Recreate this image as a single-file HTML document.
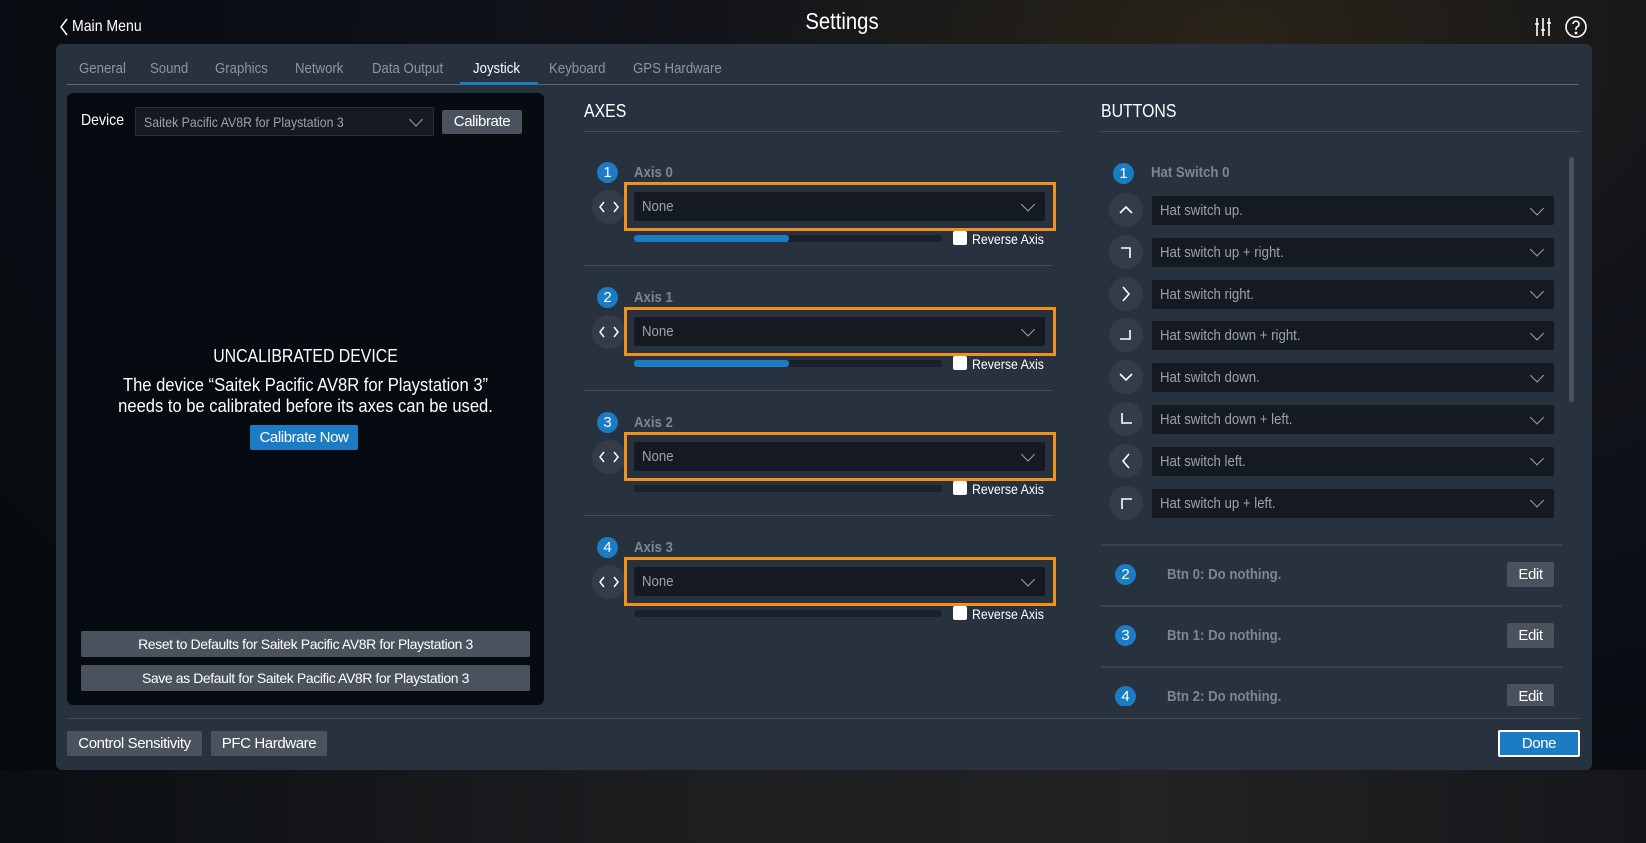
<!DOCTYPE html>
<html><head><meta charset="utf-8"><style>
*{box-sizing:border-box;margin:0;padding:0}
body{width:1646px;height:843px;overflow:hidden;position:relative;font-family:"Liberation Sans Narrow","Liberation Sans",sans-serif;color:#fff;
background:radial-gradient(ellipse at 75% 5%,#2a2418 0,#12141a 30%,#0a0e14 60%,#05080c 100%)}
.a{position:absolute}
.n{transform:scaleX(.88);transform-origin:0 0}
.nc{transform:scaleX(.88);transform-origin:50% 0}
.s{display:inline-block;transform:scaleX(.88);transform-origin:0 50%;white-space:nowrap}
.panel{left:56px;top:44px;width:1536px;height:726px;background:#28313e;border-radius:6px}
.tab{top:60px;font-size:15px;color:#8b95a3}
.btn{background:#4a525e;color:#fff;font-size:14px;text-align:center;border-radius:2px;letter-spacing:-.4px;white-space:nowrap}
.sel{background:#151a22;color:#9aa2ad;font-size:15px;border-radius:2px}
.chev{position:absolute;right:12px;top:50%;width:10px;height:10px;border-right:1.5px solid #9aa2ad;border-bottom:1.5px solid #9aa2ad;transform:translateY(-75%) rotate(45deg)}
.num{width:21px;height:21px;border-radius:50%;background:#1b7cc4;color:#fff;font-size:15px;text-align:center;line-height:21px}
.lab{color:#7d8693;font-size:15px;font-weight:bold;transform:scaleX(.88);transform-origin:0 0}
.circ{width:34px;height:34px;border-radius:50%;background:#343c49}
.line{height:1px;background:#444d5a}
</style></head><body>
<div class="a" style="left:0;top:770px;width:1646px;height:73px;background:linear-gradient(90deg,#0b0e12,#1c1d1f 40%,#232323 70%,#14161a)"></div>
<svg class="a" style="left:59px;top:18px" width="10" height="18"><path d="M8 1 L2 9 L8 17" stroke="#fff" stroke-width="1.5" fill="none"/></svg>
<div class="a n" style="left:72px;top:18px;font-size:16px">Main Menu</div>
<div class="a nc" style="left:0;width:1684px;text-align:center;top:8px;font-size:23px">Settings</div>
<svg class="a" style="left:1532px;top:16px" width="22" height="22" stroke="#fff" stroke-width="1.6" fill="none"><path d="M5 2v18M11 2v18M17 2v18M3 8h4M9 14h4M15 7h4"/></svg>
<svg class="a" style="left:1564px;top:15px" width="24" height="24" stroke="#fff" stroke-width="1.6" fill="none"><circle cx="12" cy="12" r="10"/><path d="M9 9a3 3 0 1 1 4 3c-1 .5-1 1-1 3"/><circle cx="12" cy="18" r=".6" fill="#fff"/></svg>

<div class="a panel"></div>
<div class="a tab n" style="left:79px">General</div>
<div class="a tab n" style="left:150px">Sound</div>
<div class="a tab n" style="left:215px">Graphics</div>
<div class="a tab n" style="left:295px">Network</div>
<div class="a tab n" style="left:372px">Data Output</div>
<div class="a tab n" style="left:473px;color:#fff">Joystick</div>
<div class="a tab n" style="left:549px">Keyboard</div>
<div class="a tab n" style="left:633px">GPS Hardware</div>
<div class="a line" style="left:67px;top:84px;width:1512px;background:#5a6370"></div>
<div class="a" style="left:460px;top:82px;width:78px;height:3px;background:#1b7cc4"></div>

<div class="a" style="left:67px;top:93px;width:477px;height:612px;background:#060a11;border-radius:6px"></div>
<div class="a n" style="left:81px;top:112px;font-size:16px">Device</div>
<div class="a sel" style="left:135px;top:107px;width:299px;height:29px;padding:6px 8px;font-size:14px;border:1px solid #2a303a"><span class="s">Saitek Pacific AV8R for Playstation 3</span><span class="chev"></span></div>
<div class="a btn" style="left:442px;top:110px;width:80px;height:24px;line-height:24px;font-size:15px">Calibrate</div>
<div class="a nc" style="left:67px;width:477px;text-align:center;top:346px;font-size:18px">UNCALIBRATED DEVICE</div>
<div class="a" style="left:67px;width:477px;text-align:center;top:375px;font-size:18px;line-height:21px;transform:scaleX(.92);transform-origin:50% 0">The device “Saitek Pacific AV8R for Playstation 3”<br>needs to be calibrated before its axes can be used.</div>
<div class="a btn" style="left:250px;top:425px;width:108px;height:25px;line-height:25px;background:#1b7cc4;font-size:15px">Calibrate Now</div>
<div class="a btn" style="left:81px;top:631px;width:449px;height:26px;line-height:26px">Reset to Defaults for Saitek Pacific AV8R for Playstation 3</div>
<div class="a btn" style="left:81px;top:665px;width:449px;height:26px;line-height:26px">Save as Default for Saitek Pacific AV8R for Playstation 3</div>

<div class="a line" style="left:67px;top:718px;width:1512px"></div>
<div class="a btn" style="left:67px;top:731px;width:135px;height:25px;line-height:25px;font-size:15px">Control Sensitivity</div>
<div class="a btn" style="left:211px;top:731px;width:116px;height:25px;line-height:25px;font-size:15px">PFC Hardware</div>
<div class="a btn" style="left:1498px;top:730px;width:82px;height:27px;line-height:23px;background:#1b7cc4;border:2px solid #fff;font-size:15px">Done</div>

<div class="a n" style="left:584px;top:101px;font-size:18px">AXES</div>
<div class="a line" style="left:584px;top:131px;width:476px"></div>
<div id="axes"></div>

<div class="a n" style="left:1101px;top:101px;font-size:18px">BUTTONS</div>
<div class="a line" style="left:1101px;top:131px;width:479px"></div>
<div class="a" style="left:1569px;top:157px;width:5px;height:245px;background:#4a535f;border-radius:3px"></div>
<div class="a num" style="left:1113px;top:163px">1</div>
<div class="a lab" style="left:1151px;top:164px">Hat Switch 0</div>
<div id="hats"></div>
<div id="btns"></div>

<script>
var h='';
for(var i=0;i<4;i++){var y=i*125;
h+='<div class="a num" style="left:597px;top:'+(162+y)+'px">'+(i+1)+'</div>';
h+='<div class="a lab" style="left:634px;top:'+(164+y)+'px">Axis '+i+'</div>';
h+='<div class="a circ" style="left:592px;top:'+(190+y)+'px"><svg width="34" height="34" stroke="#fff" stroke-width="1.5" fill="none"><path d="M12 12L8 17L12 22M22 12L26 17L22 22"/></svg></div>';
h+='<div class="a" style="left:624px;top:'+(182+y)+'px;width:432px;height:49px;border:3px solid #f0931e"></div>';
h+='<div class="a sel" style="left:634px;top:'+(192+y)+'px;width:411px;height:29px;padding:6px 8px"><span class="s">None</span><span class="chev"></span></div>';
h+='<div class="a" style="left:634px;top:'+(235+y)+'px;width:308px;height:7px;background:#1a212b;border-radius:3px"></div>';
if(i<2)h+='<div class="a" style="left:634px;top:'+(235+y)+'px;width:155px;height:7px;background:#1b7cc4;border-radius:3px"></div>';
h+='<div class="a" style="left:953px;top:'+(231+y)+'px;width:14px;height:14px;background:#fff;border-radius:2px"></div>';
h+='<div class="a n" style="left:972px;top:'+(231+y)+'px;font-size:14px">Reverse Axis</div>';
if(i<3)h+='<div class="a line" style="left:584px;top:'+(265+y)+'px;width:468px"></div>';}
document.getElementById('axes').innerHTML=h;
var t=['up.','up + right.','right.','down + right.','down.','down + left.','left.','up + left.'];
var ic=['M-6 3L0-3L6 3','M-5-4H4V6','M-3-7L3 0L-3 7','M4-5V4H-6','M-6-3L0 3L6-3','M-4-6V4H6','M3-7L-3 0L3 7','M-4 6V-4H6'];
h='';
for(i=0;i<8;i++){var y=196+i*41.8;
h+='<div class="a circ" style="left:1109px;top:'+(y-3)+'px"><svg width="34" height="34"><g transform="translate(17 17)"><path d="'+ic[i]+'" stroke="#fff" stroke-width="1.6" fill="none"/></g></svg></div>';
h+='<div class="a sel" style="left:1152px;top:'+y+'px;width:402px;height:29px;padding:6px 8px"><span class="s">Hat switch '+t[i]+'</span><span class="chev"></span></div>';}
document.getElementById('hats').innerHTML=h;
h='';
for(i=0;i<3;i++){var y=i*61;
h+='<div class="a line" style="left:1101px;top:'+(544+y)+'px;width:461px;height:2px;background:#3a434f"></div>';
h+='<div class="a num" style="left:1115px;top:'+(564+y)+'px">'+(i+2)+'</div>';
h+='<div class="a lab" style="left:1167px;top:'+(566+y)+'px">Btn '+i+': Do nothing.</div>';
h+='<div class="a btn" style="left:1507px;top:'+(562+y)+'px;width:47px;height:25px;line-height:25px;font-size:15px">Edit</div>';}
document.getElementById('btns').innerHTML=h;
</script>
<div class="a" style="left:1060px;top:706px;width:520px;height:12px;background:#28313e"></div>
</body></html>
